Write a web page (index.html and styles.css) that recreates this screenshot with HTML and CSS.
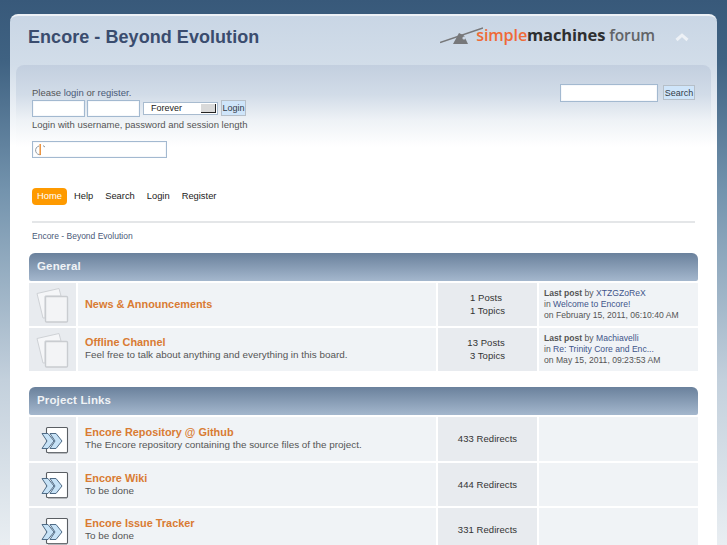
FILE: index.html
```html
<!DOCTYPE html>
<html lang="en">
<head>
<meta charset="utf-8">
<title>Encore - Beyond Evolution - Index</title>
<link rel="stylesheet" href="styles.css">
</head>
<body>
<div class="wrapper">
  <header class="header">
    <h1 class="site-title">Encore - Beyond Evolution</h1>
    <div class="logo">
      <svg class="logo-mark" width="43" height="17" viewBox="0 0 43 17" aria-hidden="true">
        <path d="M0 15.500 L43 1" stroke="#77787a" stroke-width="1.600" fill="none"/>
        <path d="M13 17 L19 6 L24 8.500 L28 17 Z" fill="#77787a"/>
        <circle cx="24" cy="11" r="1.600" fill="#c9d5e3"/>
      </svg>
      <span class="logo-text"><span class="logo-simple">simple</span><span class="logo-machines">machines</span> <span class="logo-forum">forum</span></span>
    </div>
    <svg class="collapse" width="14" height="9" viewBox="0 0 14 9" aria-hidden="true">
      <path d="M1.500 7 L7 2.200 L12.500 7" stroke="#edf1f6" stroke-width="3" fill="none"/>
    </svg>
  </header>

  <section class="upper">
    <div class="user-box">
      <p class="line-please">Please <a>login</a> or <a>register</a>.</p>
      <div class="login-row">
        <span class="field field-user"></span>
        <span class="field field-user"></span>
        <span class="select"><span class="select-text">Forever</span><span class="select-arrow"></span></span>
        <span class="btn btn-login">Login</span>
      </div>
      <p class="line-hint">Login with username, password and session length</p>
      <span class="field field-captcha">
        <svg width="14" height="14" viewBox="0 0 14 14" aria-hidden="true">
          <path d="M5 3 A4.400 4.400 0 1 0 7 11.600" stroke="#8f979f" stroke-width="1" fill="none"/>
          <path d="M6.200 1 V12" stroke="#e98a2e" stroke-width="1.400" fill="none"/>
          <path d="M9 2.600 L11 4" stroke="#8f979f" stroke-width="1" fill="none"/>
        </svg>
      </span>
    </div>
    <div class="search-box">
      <span class="field field-search"></span>
      <span class="btn btn-search">Search</span>
    </div>
  </section>

  <main class="content">
    <nav class="menu">
      <a class="menu-item active">Home</a>
      <a class="menu-item">Help</a>
      <a class="menu-item">Search</a>
      <a class="menu-item">Login</a>
      <a class="menu-item">Register</a>
    </nav>
    <div class="crumbs"><a>Encore - Beyond Evolution</a></div>

    <section class="category">
      <h2 class="cat-bar">General</h2>
      <div class="board board-general">
        <div class="cell icon"><svg width="36" height="36" viewBox="0 0 36 36" aria-hidden="true">
          <path d="M2 6.500 L24 1.500 L26 9 L10 9 L10 31 L8 31 Z" fill="#f5f6f8" stroke="#cfd2d6"/>
          <rect x="10.500" y="9.500" width="22" height="25.500" rx="1" fill="#f3f4f6" stroke="#c9ccd0" stroke-width="1.400"/>
        </svg></div>
        <div class="cell info"><a class="board-name">News &amp; Announcements</a></div>
        <div class="cell stats"><span class="posts">1 Posts</span><span>1 Topics</span></div>
        <div class="cell last"><span><strong>Last post</strong> by <a>XTZGZoReX</a></span><span>in <a>Welcome to Encore!</a></span><span>on February 15, 2011, 06:10:40 AM</span></div>
      </div>
      <div class="board board-general">
        <div class="cell icon"><svg width="36" height="36" viewBox="0 0 36 36" aria-hidden="true">
          <path d="M2 6.500 L24 1.500 L26 9 L10 9 L10 31 L8 31 Z" fill="#f5f6f8" stroke="#cfd2d6"/>
          <rect x="10.500" y="9.500" width="22" height="25.500" rx="1" fill="#f3f4f6" stroke="#c9ccd0" stroke-width="1.400"/>
        </svg></div>
        <div class="cell info"><a class="board-name">Offline Channel</a><p>Feel free to talk about anything and everything in this board.</p></div>
        <div class="cell stats"><span class="posts">13 Posts</span><span>3 Topics</span></div>
        <div class="cell last"><span><strong>Last post</strong> by <a>Machiavelli</a></span><span>in <a>Re: Trinity Core and Enc...</a></span><span>on May 15, 2011, 09:23:53 AM</span></div>
      </div>
    </section>

    <section class="category">
      <h2 class="cat-bar">Project Links</h2>
      <div class="board board-link">
        <div class="cell icon"><svg width="32" height="30" viewBox="0 0 32 30" aria-hidden="true">
          <rect x="9.500" y="3.500" width="21" height="25" rx="1" fill="#fff" stroke="#5a5e63" stroke-width="1.100"/>
          <path d="M30 29.500 H11" stroke="#b4b7bb" stroke-width="1.400"/>
          <path d="M5 9.500 H11 L17 17 L11 24.500 H5 L10 17 Z M13 9.500 H19 L25 17 L19 24.500 H13 L18 17 Z" fill="#c7e2f6" stroke="#4f6b86" stroke-width="1"/>
        </svg></div>
        <div class="cell info"><a class="board-name">Encore Repository @ Github</a><p>The Encore repository containing the source files of the project.</p></div>
        <div class="cell stats redirects">433 Redirects</div>
        <div class="cell last"></div>
      </div>
      <div class="board board-link">
        <div class="cell icon"><svg width="32" height="30" viewBox="0 0 32 30" aria-hidden="true">
          <rect x="9.500" y="3.500" width="21" height="25" rx="1" fill="#fff" stroke="#5a5e63" stroke-width="1.100"/>
          <path d="M30 29.500 H11" stroke="#b4b7bb" stroke-width="1.400"/>
          <path d="M5 9.500 H11 L17 17 L11 24.500 H5 L10 17 Z M13 9.500 H19 L25 17 L19 24.500 H13 L18 17 Z" fill="#c7e2f6" stroke="#4f6b86" stroke-width="1"/>
        </svg></div>
        <div class="cell info"><a class="board-name">Encore Wiki</a><p>To be done</p></div>
        <div class="cell stats redirects">444 Redirects</div>
        <div class="cell last"></div>
      </div>
      <div class="board board-link">
        <div class="cell icon"><svg width="32" height="30" viewBox="0 0 32 30" aria-hidden="true">
          <rect x="9.500" y="3.500" width="21" height="25" rx="1" fill="#fff" stroke="#5a5e63" stroke-width="1.100"/>
          <path d="M30 29.500 H11" stroke="#b4b7bb" stroke-width="1.400"/>
          <path d="M5 9.500 H11 L17 17 L11 24.500 H5 L10 17 Z M13 9.500 H19 L25 17 L19 24.500 H13 L18 17 Z" fill="#c7e2f6" stroke="#4f6b86" stroke-width="1"/>
        </svg></div>
        <div class="cell info"><a class="board-name">Encore Issue Tracker</a><p>To be done</p></div>
        <div class="cell stats redirects">331 Redirects</div>
        <div class="cell last"></div>
      </div>
    </section>
  </main>
</div>
</body>
</html>
```
FILE: styles.css
```css
* { box-sizing: border-box; }
html { height: 545px; overflow: hidden; }
body {
  margin: 0;
  height: 545px;
  overflow: hidden;
  padding-top: 14px;
  background: linear-gradient(#38597a 0, #3f6282 60px, #7393ad 190px, #c3d0dc 380px, #e9eef2 545px);
  font-family: "Liberation Sans", Arial, sans-serif;
  font-size: 9.500px;
  color: #444;
}
p, h1, h2 { margin: 0; }
a { color: #346; }

.wrapper {
  margin: 0 10px;
  height: 531px;
  overflow: hidden;
  border-top: 2px solid #edf1f6;
  border-radius: 8px 8px 0 0;
  background: linear-gradient(#c9d6e5 0, #d2dde9 50px, #fff 130px);
}

.header {
  display: flex;
  align-items: center;
  height: 49px;
  padding: 0 28px 6px 18px;
}
.site-title {
  font-size: 18px;
  font-weight: bold;
  color: #3a4c6e;
  letter-spacing: 0.05px;
  flex: 1;
}
.logo { display: flex; align-items: flex-end; margin-bottom: 5px; }
.logo-mark { margin-right: -7px; margin-bottom: 1px; }
.logo-text {
  font-family: "Open Sans", sans-serif;
  font-size: 16.500px;
  font-weight: 600;
  letter-spacing: -0.15px;
  line-height: 20px;
}
.logo-simple { color: #ef6a37; font-size: 16.200px; }
.logo-machines { color: #2e2f31; font-weight: 700; }
.logo-forum { color: #626467; font-size: 15.500px; }
.collapse { margin-left: 20px; }

.upper {
  display: flex;
  justify-content: space-between;
  height: 123px;
  margin: 0 6px;
  padding: 21px 16px 0;
  border-radius: 8px 8px 0 0;
  background: linear-gradient(#c3cfdf 0, #d2dce8 30px, #eef2f6 55px, #fff 82px);
}
.user-box p { line-height: 14px; color: #555; }
.line-please { height: 13px; }
.line-please a { color: #4a5a78; }
.login-row { display: flex; align-items: center; gap: 2px; height: 18px; }
.line-hint { margin-top: 1px; height: 23px; }
.field {
  display: block;
  height: 17px;
  background: #fff;
  border: 1px solid #a3b9d0;
  box-shadow: inset 0 0 0 1px #f6f8fb;
}
.field-user { width: 53px; }
.field-captcha { width: 135px; height: 17px; padding: 1px 0 0 1px; }
.field-captcha svg { display: block; }
.select {
  display: flex;
  align-items: center;
  justify-content: space-between;
  width: 75px;
  height: 13px;
  margin-left: 1px;
  background: #fff;
  border: 1px solid #a8bbcf;
  padding: 0 1px 0 7px;
  color: #222;
  font-size: 9px;
}
.select-arrow {
  width: 15px;
  height: 9px;
  background: #d9d9d9;
  border-right: 1px solid #222;
  border-bottom: 1px solid #222;
}
.btn {
  display: block;
  height: 16px;
  background: #cfe5fa;
  border: 1px solid #b6bfc8;
  color: #333c48;
  line-height: 14px;
  text-align: center;
  font-size: 9px;
}
.btn-login { width: 25px; margin-left: 1px; }
.btn-search { width: 32px; height: 15px; margin-top: 1px; }
.search-box { display: flex; align-items: flex-start; gap: 5px; margin-top: -2px; }
.field-search { width: 98px; height: 18px; }

.content { padding: 0 19px; }
.menu {
  display: flex;
  align-items: flex-start;
  gap: 12px;
  margin: 0 3px;
  height: 35px;
  border-bottom: 2px solid #e4e6e8;
  font-size: 9.350px;
}
.menu-item { color: #222; line-height: 17px; height: 17px; }
.menu-item.active {
  background: #fe9a00;
  color: #fff;
  border-radius: 4px;
  padding: 0 5px;
  margin-right: -5px;
}
.crumbs { margin: 0 3px; height: 30px; padding-top: 7px; line-height: 13px; font-size: 8.500px; }
.crumbs a { color: #4a5a78; }

.category { margin-bottom: 16px; }
.cat-bar {
  height: 28px;
  padding-left: 8px;
  line-height: 27px;
  font-size: 11.500px;
  font-weight: bold;
  color: #f0f3f6;
  letter-spacing: 0.15px;
  border-radius: 6px 6px 2px 2px;
  background: linear-gradient(#6a819c, #a4b7cd);
  margin-bottom: 2px;
}
.board {
  display: grid;
  grid-template-columns: 47px 358px 99px 159px;
  column-gap: 2px;
  margin-bottom: 2px;
}
.board-general { height: 43px; }
.board-general .stats { padding-bottom: 1px; }
.board-general .info p { margin-bottom: 2px; }
.board-link { height: 43.500px; }
.cell { background: #f0f3f6; }
.icon, .stats { background: #e8ebef; }
.icon { display: flex; align-items: center; justify-content: center; }
.info {
  display: flex;
  flex-direction: column;
  justify-content: center;
  padding-left: 7px;
  color: #555;
  line-height: 12px;
  font-size: 9.900px;
}
.board-name { color: #d97b33; font-size: 10.900px; font-weight: bold; line-height: 13px; }
.stats {
  display: flex;
  flex-direction: column;
  justify-content: center;
  align-items: center;
  line-height: 13px;
  color: #333;
  letter-spacing: 0.05px;
}
.posts { margin-right: 3px; }
.last {
  display: flex;
  flex-direction: column;
  justify-content: center;
  padding-left: 5px;
  font-size: 8.600px;
  line-height: 11px;
  color: #555;
}
.last a { color: #40558a; }
```
